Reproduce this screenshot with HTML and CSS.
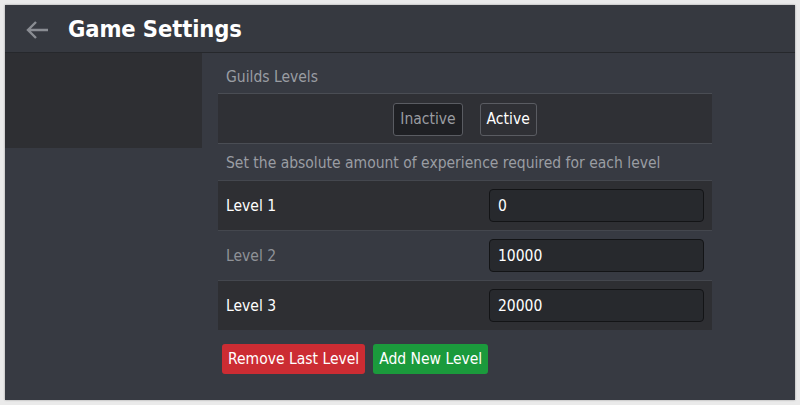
FILE: index.html
```html
<!DOCTYPE html>
<html>
<head>
<meta charset="utf-8">
<link rel="stylesheet" href="styles.css">
</head>
<body>
<div class="window">
  <header class="topbar">
    <svg class="back" width="24" height="20" viewBox="0 0 24 20"><path d="M23 10H3M11 2L3 10l8 8" fill="none" stroke="#8a8d93" stroke-width="2.4"/></svg>
    <h1 class="title">Game Settings</h1>
  </header>
  <div class="layout">
    <aside class="sidebar"></aside>
    <main class="panel">
      <div class="section-title">Guilds Levels</div>
      <div class="toggle-row">
        <button class="toggle toggle-off">Inactive</button>
        <button class="toggle toggle-on">Active</button>
      </div>
      <div class="desc">Set the absolute amount of experience required for each level</div>
      <div class="level-row dark">
        <span class="level-label">Level 1</span>
        <input class="level-input" type="text" value="0">
      </div>
      <div class="level-row light">
        <span class="level-label muted">Level 2</span>
        <input class="level-input" type="text" value="10000">
      </div>
      <div class="level-row dark">
        <span class="level-label">Level 3</span>
        <input class="level-input" type="text" value="20000">
      </div>
      <div class="actions">
        <button class="btn btn-red">Remove Last Level</button>
        <button class="btn btn-green">Add New Level</button>
      </div>
    </main>
  </div>
</div>
</body>
</html>
```
FILE: styles.css
```css
html, body {
  margin: 0;
  padding: 0;
}
body {
  background: #eaeaea;
  width: 800px;
  height: 405px;
  overflow: hidden;
  font-family: "DejaVu Sans Condensed", "DejaVu Sans", sans-serif;
}
.window {
  margin: 5px;
  width: 790px;
  height: 395px;
  background: #373a42;
  box-shadow: 0 0 2px rgba(0,0,0,0.35);
}
.topbar {
  height: 47px;
  border-bottom: 1px solid #26282c;
  display: flex;
  align-items: center;
  background: #363940;
}
.back {
  margin-left: 20px;
  margin-right: 19px;
  margin-top: 2px;
}
.title {
  margin: 0;
  color: #ffffff;
  font-size: 23.5px;
  font-weight: bold;
  letter-spacing: -0.1px;
}
.layout {
  display: flex;
  align-items: flex-start;
}
.sidebar {
  width: 197px;
  height: 95px;
  background: #2e2f33;
}
.panel {
  margin-left: 16px;
  width: 494px;
}
.section-title {
  height: 40px;
  box-sizing: border-box;
  padding: 15px 0 0 8px;
  color: #9a9da3;
  font-size: 15.5px;
}
.toggle-row {
  height: 50px;
  box-sizing: border-box;
  border-top: 1px solid #4a4d54;
  background: #2f3035;
  display: flex;
  justify-content: center;
  align-items: center;
  gap: 17px;
}
.toggle {
  font-family: inherit;
  font-size: 15.5px;
  height: 33px;
  padding: 0 6px;
  border: 1px solid #5a5c62;
  border-radius: 3px;
  margin-top: 1px;
}
.toggle-off {
  background: #1f2024;
  color: #9a9ca1;
}
.toggle-on {
  background: #2f3035;
  color: #ffffff;
}
.desc {
  height: 37px;
  box-sizing: border-box;
  border-top: 1px solid #4a4d54;
  padding: 10px 0 0 8px;
  color: #9a9da3;
  font-size: 15.5px;
}
.level-row {
  height: 50px;
  box-sizing: border-box;
  border-top: 1px solid #44474e;
  display: flex;
  align-items: center;
  justify-content: space-between;
  padding: 0 8px 0 8px;
}
.level-row.dark {
  background: #2e2f33;
}
.level-row.light {
  background: #373a42;
}
.level-label {
  color: #ffffff;
  font-size: 15.5px;
}
.level-label.muted {
  color: #8f9298;
}
.level-input {
  width: 215px;
  height: 33px;
  box-sizing: border-box;
  background: #27292d;
  border: 1px solid #131416;
  border-radius: 4px;
  color: #ffffff;
  font-family: inherit;
  font-size: 15.5px;
  padding: 0 8px;
  margin-right: 0;
}
.actions {
  display: flex;
  gap: 8px;
  padding: 14px 0 0 4px;
}
.btn {
  font-family: inherit;
  font-size: 15.5px;
  height: 30px;
  border: none;
  border-radius: 3px;
  color: #ffffff;
  padding: 0 6px;
}
.btn-red {
  background: #cc2c33;
}
.btn-green {
  background: #1b9a3c;
}
```
